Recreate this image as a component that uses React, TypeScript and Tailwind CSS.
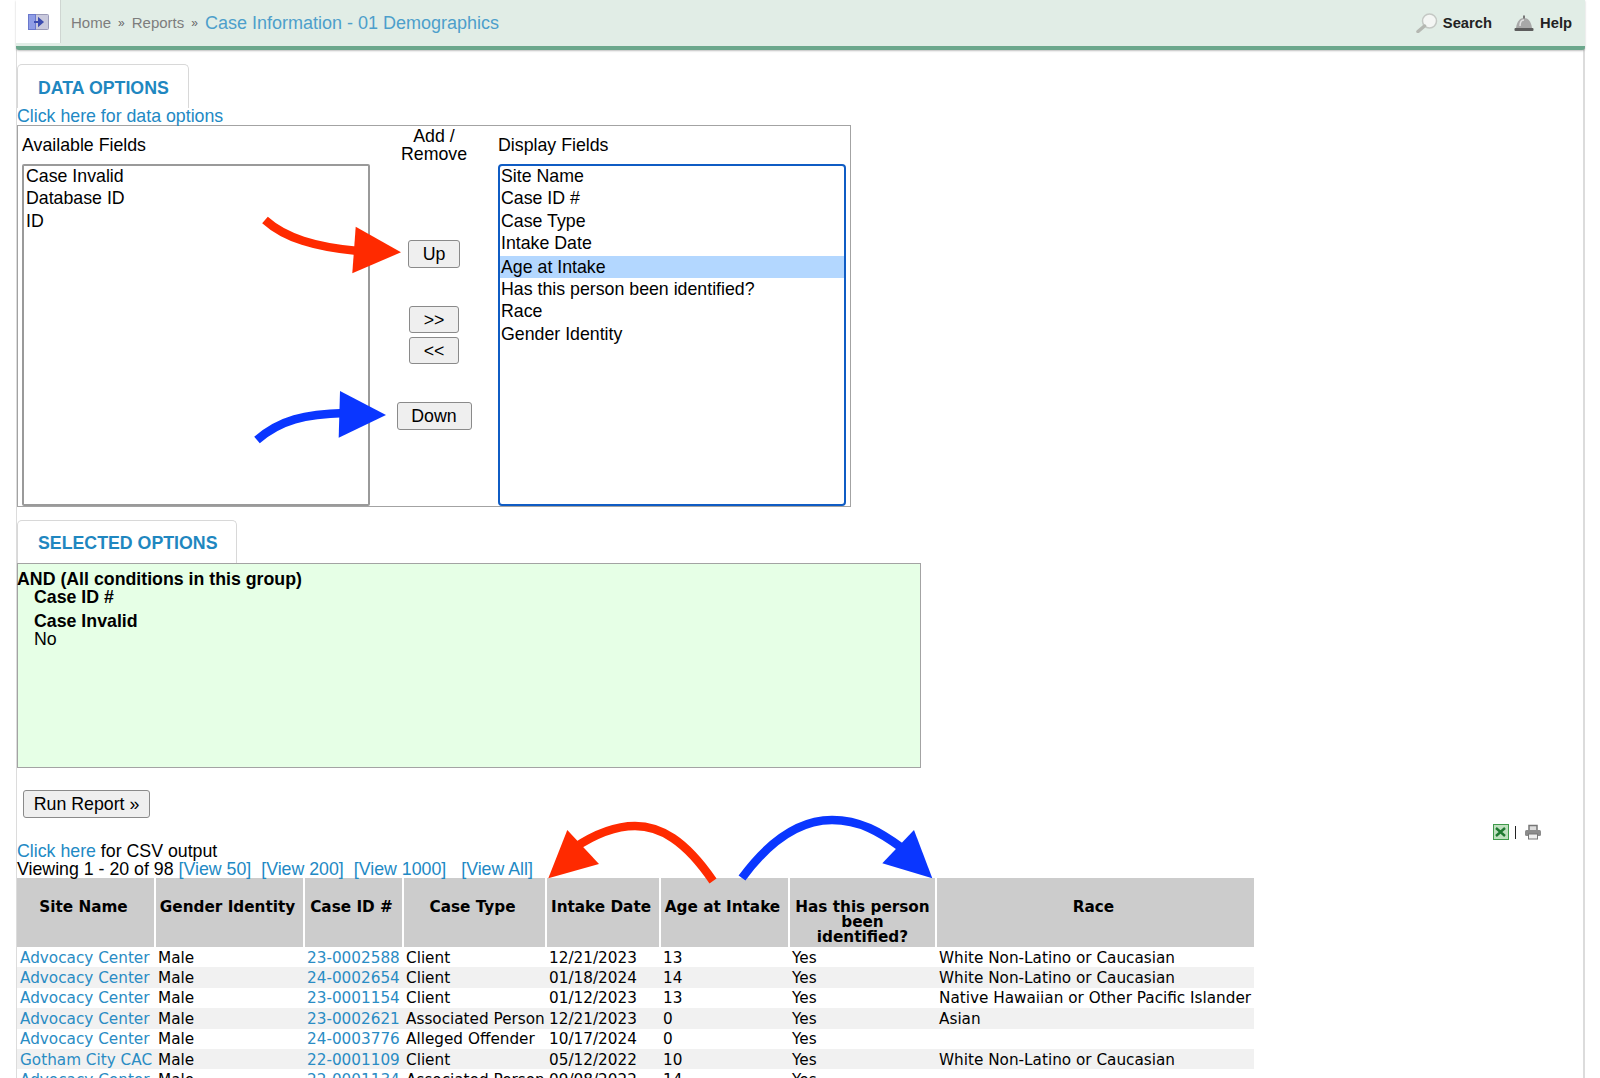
import React from "react";

const rows = [
  ["Advocacy Center", "Male", "23-0002588", "Client", "12/21/2023", "13", "Yes", "White Non-Latino or Caucasian"],
  ["Advocacy Center", "Male", "24-0002654", "Client", "01/18/2024", "14", "Yes", "White Non-Latino or Caucasian"],
  ["Advocacy Center", "Male", "23-0001154", "Client", "01/12/2023", "13", "Yes", "Native Hawaiian or Other Pacific Islander"],
  ["Advocacy Center", "Male", "23-0002621", "Associated Person", "12/21/2023", "0", "Yes", "Asian"],
  ["Advocacy Center", "Male", "24-0003776", "Alleged Offender", "10/17/2024", "0", "Yes", ""],
  ["Gotham City CAC", "Male", "22-0001109", "Client", "05/12/2022", "10", "Yes", "White Non-Latino or Caucasian"],
  ["Advocacy Center", "Male", "22-0001134", "Associated Person", "09/08/2022", "14", "Yes", ""],
];

const heads: React.ReactNode[] = [
  "Site Name",
  "Gender Identity",
  "Case ID #",
  "Case Type",
  "Intake Date",
  "Age at Intake",
  <>Has this person<br />been<br />identified?</>,
  "Race",
];
const widths = [138, 149, 99, 143, 114, 129, 147, 318];

function Btn({ children, className }: { children: React.ReactNode; className: string }) {
  return (
    <button className={"flex items-center justify-center rounded-[3px] border border-[#8a8a8a] bg-[#efefef] text-[17.75px] text-black " + className}>
      {children}
    </button>
  );
}

function Tab({ children, className }: { children: React.ReactNode; className: string }) {
  return (
    <div className={"rounded-t-[5px] border border-b-0 border-[#d8d8d8] pl-[20px] font-bold text-[17.75px] leading-[22px] text-[#1f87c0] " + className}>
      {children}
    </div>
  );
}

export default function App() {
  return (
    <div className="relative h-[1078px] w-full overflow-hidden bg-white font-['Liberation_Sans',Arial,sans-serif] text-[17.75px] text-black">
      <div className="ml-[16px] mr-[15px] h-[1078px] border-l border-r-2 border-[#dcdcdc]">
        <div className="-ml-[1px] -mr-[2px] flex h-[50px] items-stretch rounded-b-[3px] border-b-[4px] border-[#6ba78c] bg-[#e1ede6] shadow-[0_1px_2px_rgba(0,0,0,0.25)]">
          <div className="flex h-[43px] w-[45px] items-center justify-center border-r border-[#cfd6d2] bg-white">
            <svg width="21" height="16" viewBox="0 0 21 16">
              <rect x="0.5" y="0.5" width="20" height="15" rx="1" fill="#c9c9dd" stroke="#9a9ab8" />
              <rect x="0.5" y="0.5" width="7" height="15" fill="#8f9de6" stroke="#6a78cc" />
              <path d="M6 8h7M11 5l3.5 3-3.5 3z" fill="#4a5bc0" stroke="#3c4cb0" strokeWidth="2" />
            </svg>
          </div>
          <div className="flex flex-1 items-center pl-[10px]">
            <span className="text-[15px] text-[#7d7d7d]">Home</span>
            <span className="mx-[7px] text-[12px] text-[#666]">»</span>
            <span className="text-[15px] text-[#7d7d7d]">Reports</span>
            <span className="mx-[7px] text-[12px] text-[#666]">»</span>
            <span className="text-[18px] text-[#4d9fcb]">Case Information - 01 Demographics</span>
            <div className="ml-auto flex items-center pr-[13px] text-[14.75px] font-bold text-[#222]">
              <svg width="22" height="20" viewBox="0 0 22 20" className="mr-[5px]">
                <circle cx="13.5" cy="8" r="7" fill="#f4f6f4" stroke="#c4c8c4" strokeWidth="1.5" />
                <path d="M8.5 13 L2 18.5" stroke="#b5b8b2" strokeWidth="3.5" strokeLinecap="round" />
              </svg>
              <span>Search</span>
              <svg width="20" height="17" viewBox="0 0 20 17" className="ml-[22px] mr-[6px]">
                <path d="M2 13 C3 6 6 3 10 3 C14 3 17 6 18 13 Z" fill="#a8a8a8" />
                <path d="M6 11 C6 7 8 5 10 5" stroke="#e2e2e2" strokeWidth="1.5" fill="none" />
                <rect x="9" y="0.5" width="2" height="3" fill="#777" />
                <rect x="0.5" y="13" width="19" height="3" rx="1" fill="#5d5d5d" />
              </svg>
              <span>Help</span>
            </div>
          </div>
        </div>

        <Tab className="mt-[14px] h-[44px] w-[172px] pt-[12px]">DATA OPTIONS</Tab>
        <a className="-mt-px block h-[18px] leading-[18px] text-[#2289c4]">Click here for data options</a>
        <div className="flex h-[382px] w-[834px] border border-[#a3a3a3]">
          <div className="ml-[4px] flex w-[348px] flex-col">
            <div className="flex h-[38px] items-center">Available Fields</div>
            <div className="h-[342px] rounded-[2px] border-2 border-[#9a9a9a] px-[2px] leading-[22.4px]">
              <div className="-mt-px">Case Invalid</div>
              <div>Database ID</div>
              <div>ID</div>
            </div>
          </div>
          <div className="flex w-[128px] flex-col items-center leading-[17.5px]">
            <div className="pt-[2px] text-center">Add /<br />Remove</div>
            <Btn className="mt-[77px] h-[28px] w-[52px] pt-px">Up</Btn>
            <Btn className="mt-[38px] h-[27px] w-[50px] pt-[3px]">&gt;&gt;</Btn>
            <Btn className="mt-[4px] h-[27px] w-[50px] pt-[2px]">&lt;&lt;</Btn>
            <Btn className="mt-[38px] h-[28px] w-[75px] pt-px">Down</Btn>
          </div>
          <div className="flex w-[348px] flex-col">
            <div className="flex h-[38px] items-center">Display Fields</div>
            <div className="h-[342px] rounded-[4px] border-2 border-[#0f5cc4] leading-[22.4px]">
              <div className="-mt-px px-[1px]">Site Name</div>
              <div className="px-[1px]">Case ID #</div>
              <div className="px-[1px]">Case Type</div>
              <div className="px-[1px]">Intake Date</div>
              <div className="mt-px bg-[#b3d7ff] px-[1px]">Age at Intake</div>
              <div className="px-[1px]">Has this person been identified?</div>
              <div className="px-[1px]">Race</div>
              <div className="px-[1px]">Gender Identity</div>
            </div>
          </div>
        </div>

        <Tab className="mt-[13px] h-[43px] w-[220px] pt-[11px]">SELECTED OPTIONS</Tab>
        <div className="h-[205px] w-[904px] border border-[#a3a3a3] bg-[#e6ffe6] pt-[6px] leading-[18px]">
          <div className="-ml-px font-bold">AND (All conditions in this group)</div>
          <div className="pl-[16px] font-bold">Case ID #</div>
          <div className="mt-[6px] pl-[16px] font-bold">Case Invalid</div>
          <div className="pl-[16px]">No</div>
        </div>

        <div className="mt-[22px] flex h-[28px] pl-[6px]">
          <Btn className="h-[28px] w-[127px] pt-px">Run Report »</Btn>
        </div>
        <div className="flex h-[24px] items-start justify-end pr-[41px] pt-[6px]">
          <svg width="16" height="16" viewBox="0 0 16 16">
            <rect x="0.5" y="0.5" width="15" height="15" fill="#bfe0bf" stroke="#3f9a4a" />
            <path d="M3 4l9 8M12 4l-9 8" stroke="#1f7a31" strokeWidth="2.4" />
          </svg>
          <span className="ml-[6px] mr-[8px] mt-[2px] h-[13px] w-px bg-[#222]" />
          <svg width="18" height="16" viewBox="0 0 18 16">
            <path d="M5 6V1.5h8V6" fill="#ddd" stroke="#777" strokeWidth="1.5" />
            <rect x="1" y="6" width="16" height="6" rx="1.5" fill="#8b8b8b" />
            <rect x="4.5" y="10" width="9" height="5" fill="#eee" stroke="#777" />
          </svg>
        </div>
        <div className="leading-[18px]">
          <div><a className="text-[#2289c4]">Click here</a> for CSV output</div>
          <div>
            Viewing 1 - 20 of 98 <a className="text-[#2289c4]">[View 50]</a>
            <a className="ml-[10px] text-[#2289c4]">[View 200]</a>
            <a className="ml-[10px] text-[#2289c4]">[View 1000]</a>
            <a className="ml-[15px] text-[#2289c4]">[View All]</a>
          </div>
        </div>

        <table className="w-[1237px] table-fixed border-collapse font-['DejaVu_Sans',Verdana,sans-serif] text-[15.25px] leading-[15px]">
          <colgroup>
            {widths.map((w, i) => (
              <col key={i} style={{ width: w }} />
            ))}
          </colgroup>
          <thead>
            <tr className="h-[69px] bg-[#cccccc]">
              {heads.map((h, i) => (
                <th key={i} className={"border-r-2 border-white pt-[22px] text-center align-top font-bold whitespace-nowrap last:border-r-0 " + (i === 6 ? "px-[2px]" : "pl-[1px] pr-[5px]")}>
                  {h}
                </th>
              ))}
            </tr>
          </thead>
          <tbody>
            {rows.map((r, i) => (
              <tr key={i} className={i % 2 ? "h-[20.4px] bg-[#f1f1f1]" : "h-[20.4px] bg-white"}>
                {r.map((c, j) => (
                  <td key={j} className={"overflow-visible whitespace-nowrap pl-[3px] pt-[2px] " + (j === 0 || j === 2 ? "text-[#2a8cc4]" : "")}>
                    {c}
                  </td>
                ))}
              </tr>
            ))}
          </tbody>
        </table>
      </div>

      <svg className="pointer-events-none absolute left-0 top-0" width="1000" height="1000" viewBox="0 0 1000 1000">
        <path d="M265 220 C285 238 315 247 358 251" fill="none" stroke="#ff2a00" strokeWidth="8.5" />
        <path d="M355.7 226.7 L401 252.3 L352.3 273.3 Z" fill="#ff2a00" />
        <path d="M257 440 C280 420 305 414 345 413" fill="none" stroke="#0a36ff" strokeWidth="8.5" />
        <path d="M340 391 L386 415 L338.7 437.7 Z" fill="#0a36ff" />
        <path d="M713 881 C685 840 660 826 635 826 C615 826 595 834 574 848" fill="none" stroke="#ff2a00" strokeWidth="8.5" />
        <path d="M548.3 878.3 L567.3 830 L599 864 Z" fill="#ff2a00" />
        <path d="M742 878 C770 840 800 820 832 820 C860 820 880 832 902 848" fill="none" stroke="#0a36ff" strokeWidth="8.5" />
        <path d="M914 830 L932.3 878.3 L882.3 863.3 Z" fill="#0a36ff" />
      </svg>
    </div>
  );
}
